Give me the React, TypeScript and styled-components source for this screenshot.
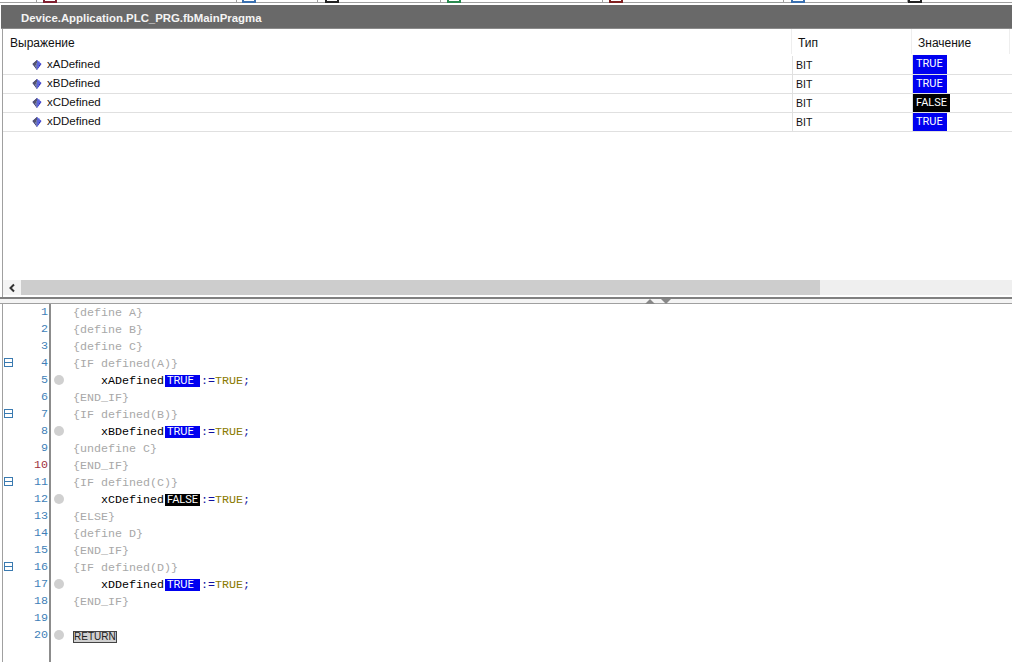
import React from "react";
import styled, { createGlobalStyle } from "styled-components";

const Global = createGlobalStyle`
  html, body { margin: 0; padding: 0; background: #fff; overflow: hidden; }
`;

const Page = styled.div`
  width: 1012px; height: 662px; display: flex; flex-direction: column; background: #fff; overflow: hidden;
  font-family: "Liberation Sans", Arial, sans-serif;
`;

const TabStrip = styled.div`
  height: 3px; flex: none; display: flex; align-items: flex-start; border-bottom: 1px solid #a0a0a0; box-sizing: border-box;
  margin-bottom: 2px;
`;
const TabStub = styled.div<{ $w: number; $pad: number; $last?: boolean }>`
  width: ${p => p.$w}px; height: 2px; flex: none; box-sizing: border-box; padding-left: ${p => p.$pad}px; display: flex;
  border-right: ${p => (p.$last ? "none" : "1px solid #a0a0a0")};
`;
const TabIcon = styled.div<{ $c: string }>`
  width: 14px; height: 3px; box-sizing: border-box; background: #fff; border: 2px solid ${p => p.$c}; border-top: none;
`;

const WatchPane = styled.section`
  flex: none; height: 292px; display: flex; flex-direction: column; border-left: 1px solid #a0a0a0; margin-left: 2px;
`;
const PaneTitle = styled.div`
  height: 24px; flex: none; box-sizing: border-box; background: #696969; border-bottom: 1px solid #8a8a8a; color: #f4f4f4; font-size: 11.4px; font-weight: 700;
  display: flex; align-items: center; padding: 2px 0 0 20px; margin-left: -2px;
`;
const TableHead = styled.div`
  display: grid; grid-template-columns: 789px 120px 98px; height: 26px; flex: none; font-size: 12px; color: #111;
`;
const HeadCell = styled.div<{ $pad: number }>`
  padding: 7px 0 0 ${p => p.$pad}px; border-right: 1px solid #eee; height: 25px; box-sizing: border-box;
`;
const TableBody = styled.div`
  flex: 1; min-height: 0;
`;
const Row = styled.div`
  display: grid; grid-template-columns: 789px 120px 1fr; height: 19px; box-sizing: border-box; border-bottom: 1px solid #e0e0e0; font-size: 11.5px; color: #111;
  &:first-child { height: 20px; }
`;
const NameCell = styled.div`
  display: flex; align-items: center; padding: 0 0 2px 29px; gap: 5px; height: 18px; box-sizing: border-box; align-self: end;
`;
const TypeCell = styled.div`
  padding: 3px 0 0 3px; border-left: 1px solid #e0e0e0; font-size: 10.5px; height: 18px; box-sizing: border-box; align-self: end;
`;
const ValueCell = styled.div`
  border-left: 1px solid #e0e0e0;
`;
const ValueTag = styled.span<{ $on: boolean }>`
  display: block; width: fit-content; height: 100%; padding: 0 3px; box-sizing: border-box; min-width: 34px;
  background: ${p => (p.$on ? "#0000f0" : "#000")}; color: #fff; font: 11px/17px Roboto, "Liberation Sans", sans-serif;
`;

const ScrollBar = styled.div`
  height: 15px; flex: none; display: flex; background: #efefef; margin-bottom: 2px;
`;
const ScrollArrow = styled.div`
  width: 18px; display: flex; align-items: center; justify-content: center; background: #f4f4f4;
`;
const ScrollThumb = styled.div`
  width: 799px; background: #cdcdcd;
`;

const Splitter = styled.div`
  height: 7px; flex: none; box-sizing: border-box; border-top: 2px solid #808080; border-bottom: 1px solid #a0a0a0; background: #f4f4f4;
  display: flex; padding-left: 645px; gap: 6px; align-items: flex-start;
`;
const SplitArrow = styled.svg`
  display: block; flex: none;
`;

const Editor = styled.section`
  flex: 1; min-height: 0; display: flex; border-left: 1px solid #a0a0a0; margin-left: 2px;
`;
const Gutter = styled.div`
  width: 46px; flex: none; border-right: 2px solid #8c8c8c;
`;
const GutterRow = styled.div`
  height: 17px; box-sizing: border-box; display: flex; align-items: center; padding: 0 1px 2px 1px;
`;
const FoldBox = styled.svg`
  display: block; flex: none;
`;
const LineNo = styled.span<{ $err?: boolean }>`
  margin-left: auto; font: 11.67px "Liberation Mono", "Courier New", monospace; color: ${p => (p.$err ? "#a03040" : "#3f7fb8")};
`;
const Code = styled.div`
  flex: 1; font: 11.67px/17px "Liberation Mono", "Courier New", monospace; white-space: pre;
`;
const CodeRow = styled.div`
  height: 17px; box-sizing: border-box; padding-top: 2px; display: flex; align-items: center;
`;
const BpSlot = styled.div`
  width: 22px; height: 15px; margin-top: -2px; flex: none; align-self: flex-start; display: flex; align-items: center; padding-left: 3px; box-sizing: border-box;
`;
const Dot = styled.div`
  width: 10px; height: 10px; border-radius: 50%; background: #d0d0d0;
`;
const Pragma = styled.span`
  color: #a8a8a8;
`;
const Indent = styled.span`
  display: inline-block; width: 28px;
`;
const Ident = styled.span`
  color: #000;
`;
const Inline = styled.span<{ $on: boolean }>`
  display: inline-block; width: 35px; height: 12px; box-sizing: border-box; padding-left: 2px; margin: -2px 1px 0 1px;
  font: 11px/12px Roboto, "Liberation Sans", sans-serif; color: #fff; background: ${p => (p.$on ? "#0000f0" : "#000")};
`;
const Op = styled.span`
  color: #1010a0;
`;
const Lit = styled.span`
  color: #8a7a00;
`;
const ReturnTag = styled.span`
  display: inline-block; height: 12px; box-sizing: border-box; border: 1px solid #444; background: #d0d0d0; color: #222;
  font: 10px/10px "Liberation Sans", Arial, sans-serif; padding: 0;
`;
const Chevron = styled.svg`
  display: block;
`;
const GemIcon = styled.svg`
  display: block; flex: none; margin-top: 2px;
`;

const Gem = () => (
  <GemIcon width="10" height="12" viewBox="0 0 10 12">
    <path d="M5 1 9.500 5 5 11 .5 5Z" fill="#2a2ac0" />
    <path d="M5 1 .5 5 5 11Z" fill="#55556a" />
    <path d="M5 3h3M4 5h4.500M3 7h4M4 9h2" stroke="#8c9cf0" strokeWidth="1" />
  </GemIcon>
);

const Fold = () => (
  <FoldBox width="9" height="9" viewBox="0 0 9 9">
    <rect x=".5" y=".5" width="8" height="8" fill="#fff" stroke="#3a7ab0" />
    <path d="M1 4.500h7" stroke="#3a7ab0" />
  </FoldBox>
);

type V = { name: string; value: string };
const vars: V[] = [
  { name: "xADefined", value: "TRUE" },
  { name: "xBDefined", value: "TRUE" },
  { name: "xCDefined", value: "FALSE" },
  { name: "xDDefined", value: "TRUE" },
];

type L = { p?: string; v?: V; ret?: boolean; fold?: boolean; err?: boolean };
const lines: L[] = [
  { p: "{define A}" }, { p: "{define B}" }, { p: "{define C}" },
  { p: "{IF defined(A)}", fold: true }, { v: vars[0] }, { p: "{END_IF}" },
  { p: "{IF defined(B)}", fold: true }, { v: vars[1] }, { p: "{undefine C}" },
  { p: "{END_IF}", err: true }, { p: "{IF defined(C)}", fold: true }, { v: vars[2] },
  { p: "{ELSE}" }, { p: "{define D}" }, { p: "{END_IF}" },
  { p: "{IF defined(D)}", fold: true }, { v: vars[3] }, { p: "{END_IF}" },
  {}, { ret: true },
];

const tabs: { w: number; c?: string; pad: number; last?: boolean }[] = [
  { w: 37, pad: 0 }, { w: 200, c: "#802030", pad: 6 }, { w: 81, c: "#3a70b0", pad: 5 }, { w: 123, c: "#222", pad: 7 },
  { w: 162, c: "#2a8a50", pad: 6 }, { w: 181, c: "#802020", pad: 6 }, { w: 124, c: "#3a70b0", pad: 7 }, { w: 104, c: "#222", pad: 0, last: true },
];

export default function App() {
  return (
    <Page>
      <Global />
      <TabStrip>
        {tabs.map((t, i) => (
          <TabStub key={i} $w={t.w} $pad={t.pad} $last={t.last}>{t.c && <TabIcon $c={t.c} />}</TabStub>
        ))}
      </TabStrip>
      <WatchPane>
        <PaneTitle>Device.Application.PLC_PRG.fbMainPragma</PaneTitle>
        <TableHead>
          <HeadCell $pad={7}>Выражение</HeadCell>
          <HeadCell $pad={6}>Тип</HeadCell>
          <HeadCell $pad={6}>Значение</HeadCell>
        </TableHead>
        <TableBody>
          {vars.map(v => (
            <Row key={v.name}>
              <NameCell><Gem />{v.name}</NameCell>
              <TypeCell>BIT</TypeCell>
              <ValueCell><ValueTag $on={v.value === "TRUE"}>{v.value}</ValueTag></ValueCell>
            </Row>
          ))}
        </TableBody>
        <ScrollBar>
          <ScrollArrow>
            <Chevron width="8" height="10" viewBox="0 0 8 10"><path d="M6 1.500 2.500 5 6 8.500" fill="none" stroke="#333" strokeWidth="2" /></Chevron>
          </ScrollArrow>
          <ScrollThumb />
        </ScrollBar>
      </WatchPane>
      <Splitter>
        <SplitArrow width="10" height="5" viewBox="0 0 10 5"><path d="M5 0 10 5H0Z" fill="#888" /></SplitArrow>
        <SplitArrow width="10" height="5" viewBox="0 0 10 5"><path d="M0 0H10L5 5Z" fill="#888" /></SplitArrow>
      </Splitter>
      <Editor>
        <Gutter>
          {lines.map((l, i) => (
            <GutterRow key={i}>
              {l.fold && <Fold />}
              <LineNo $err={l.err}>{i + 1}</LineNo>
            </GutterRow>
          ))}
        </Gutter>
        <Code>
          {lines.map((l, i) => (
            <CodeRow key={i}>
              <BpSlot>{(l.v || l.ret) && <Dot />}</BpSlot>
              {l.p && <Pragma>{l.p}</Pragma>}
              {l.v && (
                <>
                  <Indent />
                  <Ident>{l.v.name}</Ident>
                  <Inline $on={l.v.value === "TRUE"}>{l.v.value}</Inline>
                  <Op>:=</Op><Lit>TRUE</Lit><Op>;</Op>
                </>
              )}
              {l.ret && <ReturnTag>RETURN</ReturnTag>}
            </CodeRow>
          ))}
        </Code>
      </Editor>
    </Page>
  );
}
